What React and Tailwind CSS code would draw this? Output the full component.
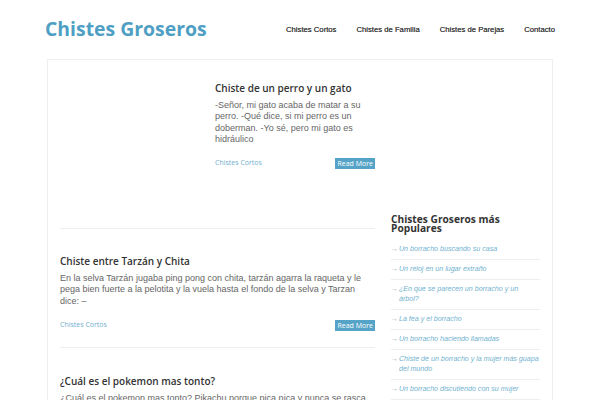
import React from "react";

const nav = ["Chistes Cortos", "Chistes de Familia", "Chistes de Parejas", "Contacto"];

// lines are split where the original page wraps them
const popular = [
  ["Un borracho buscando su casa"],
  ["Un reloj en un lugar extraño"],
  ["¿En que se parecen un borracho y un", "árbol?"],
  ["La fea y el borracho"],
  ["Un borracho haciendo llamadas"],
  ["Chiste de un borracho y la mujer más guapa", "del mundo"],
  ["Un borracho discutiendo con su mujer"],
  ["Un borracho en el bar"],
];

const heading = { fontFamily: '"Open Sans", "Noto Sans", sans-serif' };
const body = { fontFamily: '"Liberation Sans", Arial, sans-serif' };

const PostMeta = () => (
  <div className="flex items-center justify-between mt-[13px]" style={heading}>
    <span className="text-[7px] text-[#6fb0cf]">Chistes Cortos</span>
    <span className="bg-[#55a3c6] text-white text-[7px] leading-[11px] px-[2px] h-[11px]">Read More</span>
  </div>
);

const App = () => {
  return (
    <div className="w-[600px] h-[400px] overflow-hidden bg-white">
      <header className="h-[59px] flex items-center justify-between pl-[45px] pr-[45px]">
        <h1 className="text-[19.4px] leading-none font-bold text-[#4f9fc4] -mt-[1px]" style={heading}>
          Chistes Groseros
        </h1>
        <nav className="flex gap-[20px] mt-[1px]" style={body}>
          {nav.map(item => (
            <span key={item} className="text-[7.7px] text-[#444] [text-shadow:0_0_0.4px_#444]">{item}</span>
          ))}
        </nav>
      </header>

      <div className="ml-[47px] w-[506px] border border-[#eee] flex pl-[12px] pr-[10px]">
        <main className="w-[315px]">
          <article className="flex pt-[21px] pb-[14px] border-b border-[#eee]">
            <div className="w-[140px] h-[133px] shrink-0" />
            <div className="ml-[15px] flex-1">
              <h2 className="text-[10px] leading-[14px] font-semibold text-[#333]" style={heading}>
                Chiste de un perro y un gato
              </h2>
              <p className="mt-[5px] text-[9px] leading-[11.3px] text-[#666]" style={body}>
                -Señor, mi gato acaba de matar a su perro. -Qué dice, si mi perro es un doberman. -Yo sé, pero mi gato es hidráulico
              </p>
              <PostMeta />
            </div>
          </article>

          <article className="pt-[25px] pb-[16px] border-b border-[#eee]">
            <h2 className="text-[10px] leading-[14px] font-semibold text-[#333]" style={heading}>
              Chiste entre Tarzán y Chita
            </h2>
            <p className="mt-[5px] text-[9px] leading-[11.3px] text-[#666]" style={body}>
              En la selva Tarzán jugaba ping pong con chita, tarzán agarra la raqueta y le pega bien fuerte a la pelotita y la vuela hasta el fondo de la selva y Tarzan dice: –
            </p>
            <PostMeta />
          </article>

          <article className="pt-[26px] pb-[16px]">
            <h2 className="text-[10px] leading-[14px] font-semibold text-[#333]" style={heading}>
              ¿Cuál es el pokemon mas tonto?
            </h2>
            <p className="mt-[5px] text-[9px] leading-[11.3px] text-[#666]" style={body}>
              ¿Cuál es el pokemon mas tonto? Pikachu porque pica pica y nunca se rasca
            </p>
          </article>
        </main>

        <aside className="ml-[16px] w-[150px] pt-[155px]">
          <h3 className="text-[10.2px] leading-[9.3px] font-bold text-[#333]" style={heading}>
            Chistes Groseros más Populares
          </h3>
          <ul className="mt-[6px] w-[149px]" style={body}>
            {popular.map(lines => (
              <li key={lines[0]} className="flex pt-[4px] pb-[5px] border-b border-[#eee]">
                <span className="w-[8px] shrink-0 text-[7px] leading-[10px] text-[#aaa]">→</span>
                <span className="text-[7.1px] leading-[10px] italic text-[#72b2cf] whitespace-nowrap">
                  {lines.map((line, i) => (
                    <span key={i} className="block">{line}</span>
                  ))}
                </span>
              </li>
            ))}
          </ul>
        </aside>
      </div>
    </div>
  );
};

export default App;
